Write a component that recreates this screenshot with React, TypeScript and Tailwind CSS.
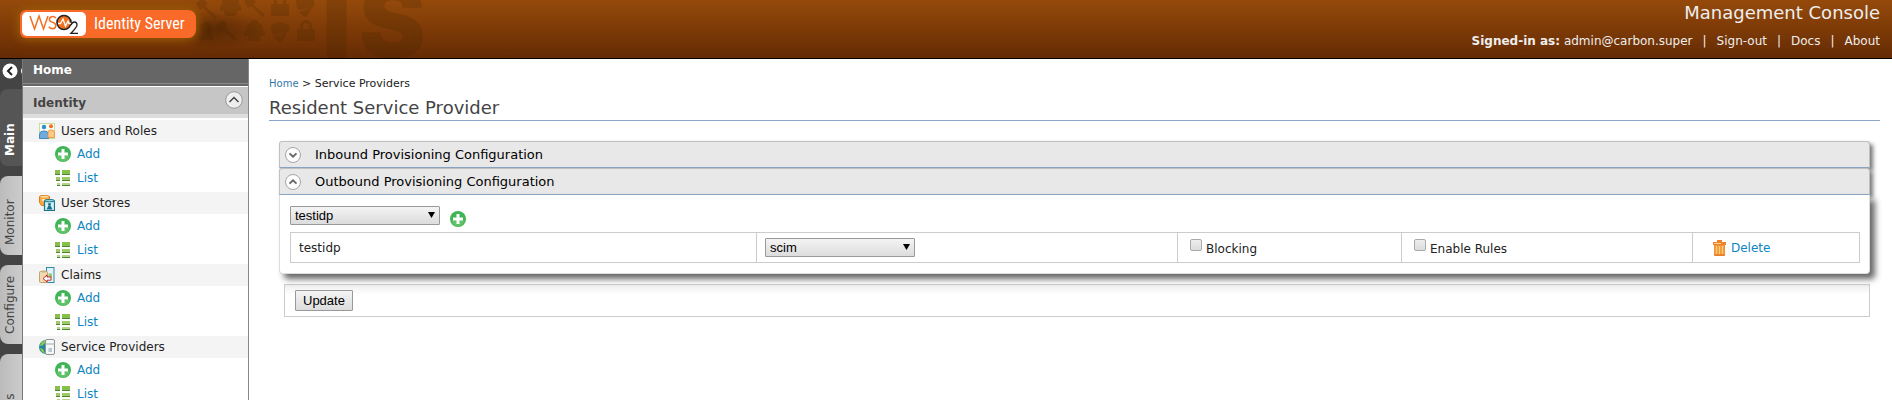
import React from "react";

function AddIcon({ className = "" }: { className?: string }) {
  return (
    <svg className={`block h-4 w-4 shrink-0 ${className}`} viewBox="0 0 16 16" aria-hidden="true">
      <circle cx="8" cy="8" r="8" fill="#3fb558" />
      <path d="M1.500 9a6.500 6.500 0 0 0 13 0c-3 1.500-9 1.500-13 0z" fill="#62c268" />
      <path d="M6.500 3h3v3.500H13v3H9.500V13h-3V9.500H3v-3h3.500z" fill="#fff" />
    </svg>
  );
}

function ListIcon() {
  const rows = [
    { x: 0, y: 0, w: 5, h: 5, c: "#86bf4a" },
    { x: 1, y: 7, w: 4, h: 4, c: "#9fca68" },
    { x: 2, y: 13, w: 3, h: 3, c: "#b3d58a" },
  ];
  return (
    <svg className="block h-4 w-4 shrink-0" viewBox="0 0 16 16" aria-hidden="true">
      {rows.map((r) => (
        <g key={r.y}>
          <rect x={r.x} y={r.y} width={r.w} height={r.h} fill={r.c} />
          <rect x="7" y={r.y} width="8" height={r.h} fill={r.c} />
          <rect x={r.x} y={r.y + r.h - 1} width={r.w} height="1" fill="#4a8a2c" />
          <rect x="7" y={r.y + r.h - 1} width="8" height="1" fill="#4a8a2c" />
        </g>
      ))}
    </svg>
  );
}

function UsersIcon() {
  return (
    <svg className="block h-4 w-4" viewBox="0 0 16 16" aria-hidden="true">
      <rect x="0.500" y="0.500" width="15" height="15" fill="#fafdf2" stroke="#c5dda0" />
      <circle cx="5" cy="4" r="2.200" fill="#2c8fce" />
      <path d="M0.500 15.500V12q0-4 3.500-4h2q3.500 0 3.500 4v3.500z" fill="#6badde" stroke="#2f79b8" strokeWidth="0.800" />
      <circle cx="12" cy="3.200" r="2" fill="#f46a25" />
      <path d="M9 14.500V10.500q-.5-3.500 2.500-3.500H13q2.500 0 2.500 3v4.500z" fill="#fcc88a" stroke="#f08a30" strokeWidth="0.800" />
    </svg>
  );
}

function StoresIcon() {
  return (
    <svg className="block h-4 w-4" viewBox="0 0 16 16" aria-hidden="true">
      <path d="M0.500 1.500q0-1 4.500-1t5.500 1v9H2.500l-2-3z" fill="#f9a844" stroke="#df7a1c" />
      <ellipse cx="5.500" cy="1.600" rx="4" ry="0.900" fill="#ffe0a8" />
      <circle cx="4.500" cy="5" r="1.300" fill="#fff1d6" />
      <path d="M5.500 6v9.500h10V6z" fill="#d5eef4" stroke="#16788c" strokeWidth="1.200" />
      <ellipse cx="10.500" cy="5.700" rx="5" ry="1.200" fill="#9fd6e0" stroke="#16788c" />
      <circle cx="10.500" cy="9.300" r="1.400" fill="#16708a" />
      <path d="M7.500 14.500 9.500 10.500h2l2 4z" fill="#16708a" />
    </svg>
  );
}

function ClaimsIcon() {
  return (
    <svg className="block h-4 w-4" viewBox="0 0 16 16" aria-hidden="true">
      <rect x="7.500" y="0.500" width="7.500" height="15" fill="#e3f2f6" stroke="#2f8ba6" />
      <rect x="9.500" y="6.500" width="3.500" height="4" fill="#9cc46e" />
      <rect x="0.500" y="4.500" width="8" height="11" rx="1" fill="#f1dab2" stroke="#c7a067" />
      <rect x="2.500" y="3.500" width="4" height="2" fill="#c9b08a" />
      <path d="M4 11.500 8 8v2h4v3.200H8V15z" fill="#fff" stroke="#c22c2c" />
    </svg>
  );
}

function ProvidersIcon() {
  return (
    <svg className="block h-4 w-4" viewBox="0 0 16 16" aria-hidden="true">
      <path d="M7 1A7 7 0 0 0 7 15z" fill="#1f86a8" />
      <path d="M2 3.500 6 1v3L3.500 6.500 1 7zM1 9l3 1 2 4.500Q1.500 13 1 9z" fill="#8cc850" />
      <rect x="6.500" y="0.500" width="9" height="15" rx="1.500" fill="#f7f7f7" stroke="#8e9494" />
      <path d="M6.500 5h9" stroke="#a4a9a9" />
      <rect x="9.500" y="9" width="3.500" height="4" fill="#b7c8d6" />
    </svg>
  );
}

function TrashIcon() {
  return (
    <svg className="block h-4 w-[13px] shrink-0" viewBox="0 0 13 16" aria-hidden="true">
      <path d="M4 0h5v2h4v3H0V2h4z" fill="#ee8228" />
      <path d="M1 3h7v1H1z" fill="#fbd2a4" />
      <path d="M1 5h11v10l-1 1H2l-1-1z" fill="#f39236" />
      <path d="M3.500 6v8.500M6.500 6v8.500M9.500 6v8.500" stroke="#f8d078" strokeWidth="1.400" />
      <path d="M1 15h11" stroke="#dd6f1c" />
    </svg>
  );
}

function RoundChevron({ up = false }: { up?: boolean }) {
  return (
    <svg className="block h-4 w-4 shrink-0" viewBox="0 0 16 16" aria-hidden="true">
      <circle cx="8" cy="8" r="7.500" fill="#fdfdfd" stroke="#a5a5a5" />
      <path d={up ? "M4.500 9.700 8 6.300l3.500 3.400" : "M4.500 6.300 8 9.700l3.500-3.400"} fill="none" stroke="#666" strokeWidth="1.800" />
    </svg>
  );
}

function CollapseIcon() {
  return (
    <svg className="block h-[18px] w-[18px]" viewBox="0 0 18 18" aria-hidden="true">
      <circle cx="9" cy="9" r="8.300" fill="#eee" stroke="#999" />
      <path d="M4.500 11 9 6.500l4.500 4.500" fill="none" stroke="#444" strokeWidth="1.500" />
    </svg>
  );
}

const glyphShapes = {
  lock: "M0 7h18v12H0zM3 7V4a6 6 0 0 1 12 0v3h-3V4a3 3 0 0 0-6 0v3z",
  shield: "M9 0l9 3q1 4-1 7L2 13Q0 8 0 3zM3 15l13-5q-2 7-7 10-4-2-6-5z",
  figure: "M2 8q0-7 6-7t6 7l-2 4 3 2v5H1v-5l3-2z",
  gavel: "M0 5 7 0l5 6-3 2 12 11-2 2L7 10l-3 2z",
  group: "M3 7a3 3 0 0 1 3-5 4 4 0 0 1 9 0 3 3 0 0 1 3 5q4 2 3 7h-4q0 4-2 5H6q-2-1-2-5H0q-1-5 3-7z",
};

function BrandBackdrop() {
  const glyphs: { x: number; y: number; d: string }[] = [
    { x: 12, y: -2, d: glyphShapes.gavel },
    { x: 36, y: -3, d: glyphShapes.group },
    { x: 60, y: -4, d: glyphShapes.gavel },
    { x: 87, y: -3, d: glyphShapes.lock },
    { x: 112, y: -3, d: glyphShapes.shield },
    { x: 14, y: 21, d: glyphShapes.figure },
    { x: 32, y: 20, d: glyphShapes.gavel },
    { x: 60, y: 22, d: glyphShapes.group },
    { x: 87, y: 22, d: glyphShapes.shield },
    { x: 113, y: 22, d: glyphShapes.lock },
  ];
  return (
    <svg className="absolute left-[184px] top-0 h-[58px] w-[140px]" viewBox="0 0 140 58" aria-hidden="true">
      <defs>
        <radialGradient id="shade">
          <stop offset="0" stopColor="#3a1a00" stopOpacity="0.500" />
          <stop offset="1" stopColor="#3a1a00" stopOpacity="0" />
        </radialGradient>
      </defs>
      <ellipse cx="30" cy="30" rx="50" ry="20" fill="url(#shade)" />
      {glyphs.map((g) => (
        <path key={`${g.x}-${g.y}`} transform={`translate(${g.x} ${g.y})`} d={g.d} fill="#3a2200" fillOpacity="0.200" />
      ))}
    </svg>
  );
}

function Logo() {
  return (
    <a href="#home" aria-label="WSO2 Identity Server" className="relative flex h-7 items-center rounded-md rounded-r-lg bg-[#f96a28] pl-[2px] pr-[11px] shadow-[0_0_10px_2px_#9a5a08]">
      <svg className="block h-6 w-16" viewBox="0 0 64 24" aria-hidden="true">
        <rect width="64" height="24" rx="5" fill="#fff" />
        <path d="M8 4l4.500 13L17 4l4.500 13L26 4" fill="none" stroke="#f37021" strokeWidth="1.500" />
        <path d="M34 6q-2-2-4.500-1.300Q27 5.500 27.500 8q.5 1.500 3 2.300 3.500 1 3.300 3.500-.3 2.700-3 2.900-2.500 0-4-2" fill="none" stroke="#f37021" strokeWidth="1.500" />
        <circle cx="42" cy="10.500" r="7" fill="#f37021" stroke="#222" strokeWidth="1.600" />
        <path d="M36 11.500h2.500L41 7l2.500 7L46 9l1 2.500h2" fill="none" stroke="#fff" strokeWidth="1.300" />
        <path d="M49 13q1-3 3.500-3T55 13q0 2-6 8.300h7" fill="none" stroke="#222" strokeWidth="1.300" />
      </svg>
      <span className="pl-2 font-['Liberation_Sans_Narrow','Roboto_Condensed','Open_Sans_Condensed','DejaVu_Sans_Condensed',sans-serif] text-[16px] leading-7 text-white">Identity Server</span>
    </a>
  );
}

function Header() {
  return (
    <header className="relative flex h-[59px] shrink-0 justify-between overflow-hidden border-b border-black bg-linear-to-b from-[#954a0b] to-[#662b04] pl-5 pr-3">
      <BrandBackdrop />
      <div aria-hidden="true" className="absolute left-[322px] top-[-7px] flex gap-2 font-['Inter',sans-serif] text-[100px] font-black leading-[58px] text-[#3a2200]/20">
        <span>I</span>
        <span>S</span>
      </div>
      <div className="pt-[10px]">
        <Logo />
      </div>
      <div className="relative text-right text-[#eee]">
        <div className="pt-px text-[18px] leading-6">Management Console</div>
        <div className="flex justify-end gap-[10px] pt-[6px] text-[12px] leading-5">
          <span><strong>Signed-in as:</strong> admin@carbon.super</span>
          <span>|</span>
          <a href="#sign-out">Sign-out</a>
          <span>|</span>
          <a href="#docs">Docs</a>
          <span>|</span>
          <a href="#about">About</a>
        </div>
      </div>
    </header>
  );
}

function RegionTabs() {
  const tabs = ["Main", "Monitor", "Configure", "Tools"];
  return (
    <nav aria-label="Regions" className="flex w-[22px] shrink-0 flex-col gap-[10px] bg-[#444]">
      <button aria-label="Collapse menu" className="flex h-5 shrink-0 items-end pl-[2px]">
        <svg className="block h-4 w-5 shrink-0" viewBox="0 0 20 16" aria-hidden="true">
          <circle cx="8" cy="8" r="7.500" fill="#fff" />
          <path d="M10 4 6 8l4 4" fill="none" stroke="#222" strokeWidth="2" />
          <path d="M20 5q-2 3 0 6z" fill="#fff" />
        </svg>
      </button>
      {tabs.map((t, i) => (
        <button
          key={t}
          className={`flex w-full shrink-0 rotate-180 items-center justify-start rounded-r-lg pl-[3px] pt-[10px] text-[12px] leading-5 [writing-mode:vertical-rl] ${
            i === 0 ? "h-[77px] bg-[#555] font-bold text-white" : "h-[79px] bg-linear-to-l from-[#bbb] to-[#ccc] text-[#444]"
          }`}
        >
          {t}
        </button>
      ))}
    </nav>
  );
}

const groups = [
  { name: "Users and Roles", icon: <UsersIcon /> },
  { name: "User Stores", icon: <StoresIcon /> },
  { name: "Claims", icon: <ClaimsIcon /> },
  { name: "Service Providers", icon: <ProvidersIcon /> },
];

function Sidebar() {
  return (
    <aside className="w-[227px] shrink-0 border-x border-[#888] border-l-[#777] bg-white">
      <div className="h-7 border-b border-white bg-[#666] text-[12px] font-bold leading-[22px] text-white">
        <div className="h-[25px] border-b border-[#888] pl-[10px]">
          <a href="#home">Home</a>
        </div>
      </div>
      <div className="flex h-[31px] items-start justify-between border-b-4 border-[#ddd] bg-[#c6c6c6] pl-[10px] pr-[5px] pt-1 text-[#444]">
        <h2 className="text-[12px] font-bold leading-6">Identity</h2>
        <button aria-label="Collapse Identity">
          <CollapseIcon />
        </button>
      </div>
      <ul className="pt-[2px] text-[12px]">
        {groups.map((g) => (
          <li key={g.name} className="pb-[2px]">
            <div className="flex h-[22px] items-center gap-[6px] bg-[#f4f4f4] pl-4 leading-5 text-[#222]">
              {g.icon}
              {g.name}
            </div>
            <ul className="pl-8 leading-6 text-[#0d86c3]">
              <li>
                <a href="#add" className="flex h-6 items-center gap-[6px]"><AddIcon />Add</a>
              </li>
              <li>
                <a href="#list" className="flex h-6 items-center gap-[6px]"><ListIcon />List</a>
              </li>
            </ul>
          </li>
        ))}
      </ul>
    </aside>
  );
}

function Picker({ label, value }: { label: string; value: string }) {
  return (
    <div className="relative w-[150px]">
      <select
        aria-label={label}
        defaultValue={value}
        className="block h-[19px] w-full appearance-none rounded-[1px] border border-[#999] bg-linear-to-b from-[#f4f4f4] to-[#dcdcdc] pl-1 font-['Liberation_Sans',sans-serif] text-[13px] leading-4 text-black"
      >
        <option>{value}</option>
      </select>
      <svg className="pointer-events-none absolute right-[5px] top-[6px] h-[6px] w-[7px]" viewBox="0 0 7 6" aria-hidden="true">
        <path d="M0 0h7L3.500 6z" fill="#000" />
      </svg>
    </div>
  );
}

function Check({ id, label }: { id: string; label: string }) {
  return (
    <div className="flex items-start gap-1">
      <input
        id={id}
        type="checkbox"
        className="h-3 w-3 appearance-none rounded-[2px] border border-[#aaa] bg-linear-to-b from-[#eee] to-[#dcdcdc]"
      />
      <label htmlFor={id} className="pt-[2px] leading-4">{label}</label>
    </div>
  );
}

function SectionBar({ title, open = false }: { title: string; open?: boolean }) {
  return (
    <h3 className="rounded-t-[3px] border border-[#c0c0c0] border-b-[#8aa6c6] bg-[#e8e8e8] shadow-[3px_3px_4px_#777]">
      <button aria-expanded={open} className="flex h-[25px] w-full items-center gap-[14px] pl-[5px] text-[13px] text-black">
        <RoundChevron up={open} />
        {title}
      </button>
    </h3>
  );
}

function Content() {
  return (
    <main className="min-w-0 flex-1 bg-white pl-5 pr-3 pt-[17px] text-[12px] text-[#222]">
      <nav aria-label="Breadcrumb" className="text-[11px] leading-4">
        <a href="#home" className="text-[10px] text-[#3378a8]">Home</a> &gt; Service Providers
      </nav>
      <h1 className="border-b border-[#8aa6c6] pt-[3px] text-[18px] leading-[25px] text-[#444]">Resident Service Provider</h1>
      <div className="px-[10px] pt-5">
        <SectionBar title="Inbound Provisioning Configuration" />
        <SectionBar title="Outbound Provisioning Configuration" open />
        <div className="relative rounded-b-[4px] border border-t-0 border-[#ddd] bg-white px-[10px] pb-[10px] pt-[11px] shadow-[5px_5px_6px_#666]">
          <div className="flex items-start gap-[10px]">
            <Picker label="Identity provider" value="testidp" />
            <button aria-label="Add identity provider" className="pt-[5px]"><AddIcon /></button>
          </div>
          <table className="mt-[5px] w-full table-fixed border-collapse">
            <colgroup>
              <col className="w-[466px]" />
              <col className="w-[421px]" />
              <col className="w-[224px]" />
              <col className="w-[291px]" />
              <col className="w-[167px]" />
            </colgroup>
            <tbody>
              <tr className="h-[30px]">
                <td className="border border-[#ccc] px-2">testidp</td>
                <td className="border border-[#ccc] px-2"><Picker label="Connector" value="scim" /></td>
                <td className="border border-[#ccc] px-3"><Check id="blocking" label="Blocking" /></td>
                <td className="border border-[#ccc] px-3"><Check id="rules" label="Enable Rules" /></td>
                <td className="border border-[#ccc] px-5">
                  <a href="#delete" className="flex items-center gap-[5px] text-[#0d86c3]"><TrashIcon />Delete</a>
                </td>
              </tr>
            </tbody>
          </table>
        </div>
        <div className="ml-[5px] mt-[10px] border border-[#ccc] bg-linear-to-b from-[#eee] to-white to-30% px-[10px] py-[5px]">
          <button className="block h-[21px] rounded-[1px] border border-[#999] bg-linear-to-b from-[#f4f4f4] to-[#dcdcdc] px-[7px] font-['Liberation_Sans',sans-serif] text-[13px] leading-4 text-black">Update</button>
        </div>
      </div>
    </main>
  );
}

export default function App() {
  return (
    <div className="flex h-screen flex-col overflow-hidden bg-white font-['DejaVu_Sans',sans-serif]">
      <Header />
      <div className="flex min-h-0 flex-1 overflow-hidden">
        <RegionTabs />
        <Sidebar />
        <Content />
      </div>
    </div>
  );
}
